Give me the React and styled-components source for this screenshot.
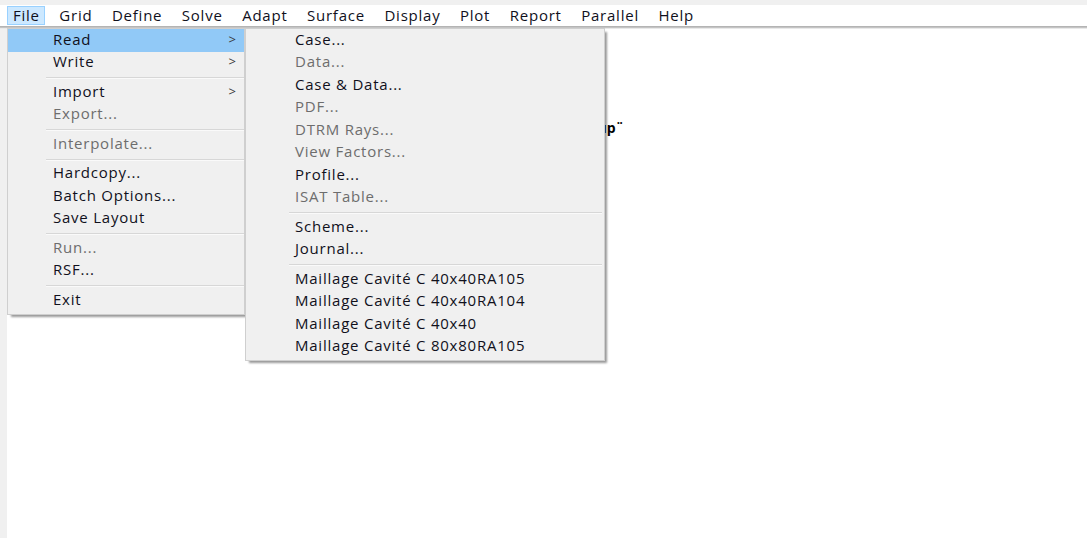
import React from 'react';
import styled, { createGlobalStyle, css } from 'styled-components';

const GlobalStyle = createGlobalStyle`
  html, body {
    margin: 0;
    padding: 0;
    background: #f0f0f0;
    overflow: hidden;
  }
  body {
    font-family: "Open Sans", "Noto Sans", "Liberation Sans", sans-serif;
  }
`;

const Window = styled.div`
  display: flex;
  flex-direction: column;
  width: 1087px;
  height: 538px;
  padding-top: 5px;
  box-sizing: border-box;
  background: #f0f0f0;
`;

const MenuBar = styled.nav`
  position: relative;
  display: flex;
  align-items: stretch;
  height: 21px;
  padding-left: 7px;
  background: #ffffff;
  border-bottom: 1px solid #b4b4b4;
  box-shadow: 0 1px 1px rgba(0, 0, 0, 0.18);
  z-index: 2;
`;

const menuText = css`
  font-size: 15px;
  letter-spacing: 0.77px;
  color: #10101c;
`;

const BarItem = styled.div`
  position: relative;
  display: flex;
  align-items: center;
  height: 19px;
  margin-top: 1px;
  padding: 0 4px 1px 5px;
  margin-right: 8.5px;
  ${menuText}
  border: 1px solid transparent;
  box-sizing: border-box;
  white-space: nowrap;

  ${({ $open }) =>
    $open &&
    css`
      background: #cce8ff;
      border-color: #99d1ff;
    `}
`;

const Content = styled.main`
  flex: 1;
  margin-left: 7px;
  margin-top: 2px;
  background: #ffffff;
  padding-top: 89px;
`;

const Banner = styled.div`
  width: 617px;
  text-align: right;
  font-size: 14px;
  font-weight: 700;
  color: #000;
  white-space: nowrap;
`;

const Dropdown = styled.div`
  position: absolute;
  top: 21px;
  left: ${({ $left }) => $left}px;
  width: ${({ $width }) => $width}px;
  padding: ${({ $pad }) => $pad};
  background: #f0f0f0;
  border: 1px solid #cfcfcf;
  box-shadow: 3px 3px 2px -1px rgba(0, 0, 0, 0.4);
  box-sizing: border-box;
  z-index: 5;
`;

const SubMenu = styled(Dropdown)`
  top: -1px;
  left: 100%;
  margin-left: 1px;
`;

const Row = styled.div`
  position: relative;
  display: flex;
  align-items: center;
  height: 22.5px;
  box-sizing: border-box;
  padding-left: ${({ $indent }) => $indent}px;
  padding-right: 8px;
  padding-bottom: 3px;
  ${menuText}
  color: ${({ $disabled }) => ($disabled ? '#6d6d6d' : '#10101c')};
  background: ${({ $active }) => ($active ? '#91c9f7' : 'transparent')};
  white-space: nowrap;
`;

const Label = styled.span`
  flex: 1;
`;

const Arrow = styled.span`
  font-size: 13px;
  letter-spacing: 0;
  color: #3a3a3a;
`;

const Separator = styled.div`
  height: 7px;
  display: flex;
  align-items: center;
  padding-left: ${({ $indent }) => $indent}px;
  padding-right: ${({ $right }) => $right || 0}px;

  &::after {
    content: '';
    flex: 1;
    height: 1px;
    background: #d7d7d7;
    box-shadow: 0 1px 0 #fafafa;
  }
`;

const barMenus = ['File', 'Grid', 'Define', 'Solve', 'Adapt', 'Surface', 'Display', 'Plot', 'Report', 'Parallel', 'Help'];

const fileItems = [
  { label: 'Read', sub: true, active: true },
  { label: 'Write', sub: true },
  '-',
  { label: 'Import', sub: true },
  { label: 'Export...', disabled: true },
  '-',
  { label: 'Interpolate...', disabled: true },
  '-',
  { label: 'Hardcopy...' },
  { label: 'Batch Options...' },
  { label: 'Save Layout' },
  '-',
  { label: 'Run...', disabled: true },
  { label: 'RSF...' },
  '-',
  { label: 'Exit' },
];

const readItems = [
  { label: 'Case...' },
  { label: 'Data...', disabled: true },
  { label: 'Case & Data...' },
  { label: 'PDF...', disabled: true },
  { label: 'DTRM Rays...', disabled: true },
  { label: 'View Factors...', disabled: true },
  { label: 'Profile...' },
  { label: 'ISAT Table...', disabled: true },
  '-',
  { label: 'Scheme...' },
  { label: 'Journal...' },
  '-',
  { label: 'Maillage Cavité C 40x40RA105' },
  { label: 'Maillage Cavité C 40x40RA104' },
  { label: 'Maillage Cavité C 40x40' },
  { label: 'Maillage Cavité C 80x80RA105' },
];

const ReadMenu = () => (
  <SubMenu $width={360} $pad="0 0 2px 0">
    {readItems.map((item, i) =>
      item === '-' ? (
        <Separator key={i} $indent={43} $right={2} />
      ) : (
        <Row key={i} $indent={49} $disabled={item.disabled}>
          <Label>{item.label}</Label>
        </Row>
      )
    )}
  </SubMenu>
);

const FileMenu = () => (
  <Dropdown $left={-1} $width={238} $pad="0 0 2px 0">
    {fileItems.map((item, i) =>
      item === '-' ? (
        <Separator key={i} $indent={38} />
      ) : (
        <Row key={i} $indent={45} $disabled={item.disabled} $active={item.active}>
          <Label>{item.label}</Label>
          {item.sub && <Arrow>&gt;</Arrow>}
          {item.label === 'Read' && <ReadMenu />}
        </Row>
      )
    )}
  </Dropdown>
);

export default function App() {
  return (
    <>
      <GlobalStyle />
      <Window>
        <MenuBar>
          {barMenus.map((name) => (
            <BarItem key={name} $open={name === 'File'}>
              {name}
              {name === 'File' && <FileMenu />}
            </BarItem>
          ))}
        </MenuBar>
        <Content>
          <Banner>Welcome to the solver setup¨</Banner>
        </Content>
      </Window>
    </>
  );
}
